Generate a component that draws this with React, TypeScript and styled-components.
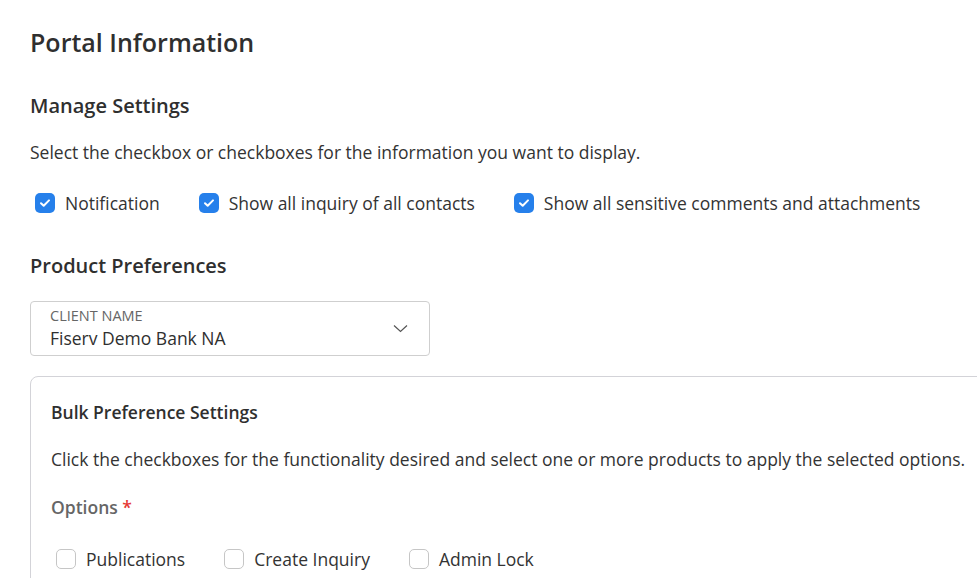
import React, { useState } from 'react'
import styled, { createGlobalStyle } from 'styled-components'

const Global = createGlobalStyle`
  html, body { margin: 0; padding: 0; background: #fff; overflow: hidden; }
  body { font-family: 'Open Sans', 'Noto Sans', sans-serif; color: #333; }
`

const Page = styled.main`
  padding: 23px 0 0 30px;
  width: 1000px;
`

const Title = styled.h1`
  margin: 0;
  font-size: 25px;
  font-weight: 600;
  line-height: 38px;
  color: #2f2f2f;
`

const SectionTitle = styled.h2`
  margin: 0;
  font-size: 20px;
  font-weight: 600;
  line-height: 28px;
  color: #2f2f2f;
`

const Text = styled.p`
  margin: 0;
  font-size: 17.5px;
  line-height: 24px;
  color: #333;
`

const Block = styled.section<{ $top: number }>`
  margin-top: ${({ $top }) => $top}px;
`

const CheckRow = styled.div<{ $gap: number }>`
  display: flex;
  align-items: center;
  gap: ${({ $gap }) => $gap}px;
`

const CheckItem = styled.label`
  display: flex;
  align-items: center;
  gap: 10px;
  font-size: 17.5px;
  line-height: 24px;
  color: #333;
  cursor: pointer;
`

const Box = styled.span<{ $on: boolean }>`
  width: 20px;
  height: 20px;
  margin-left: 5px;
  box-sizing: border-box;
  border-radius: 5px;
  display: flex;
  align-items: center;
  justify-content: center;
  background: ${({ $on }) => ($on ? '#2680eb' : '#fff')};
  border: ${({ $on }) => ($on ? 'none' : '1px solid #c6c6c6')};
`

const Select = styled.div`
  width: 400px;
  height: 55px;
  box-sizing: border-box;
  border: 1px solid #cfcfcf;
  border-radius: 4px;
  padding: 0 21px 0 19px;
  display: flex;
  align-items: center;
  justify-content: space-between;
`

const SelectText = styled.div`
  display: flex;
  flex-direction: column;
  gap: 1px;
`

const SelectLabel = styled.span`
  font-size: 14.5px;
  line-height: 18px;
  color: #666;
  text-transform: uppercase;
`

const SelectValue = styled.span`
  font-size: 17.5px;
  line-height: 24px;
  color: #2f2f2f;
`

const Card = styled.div`
  margin-top: 20px;
  width: 1000px;
  border: 1px solid #d3d3d8;
  border-radius: 8px;
  padding: 23px 20px 40px;
`

const CardTitle = styled.h3`
  margin: 0;
  font-size: 17.5px;
  font-weight: 600;
  line-height: 24px;
  color: #2f2f2f;
`

const OptionsLabel = styled.div`
  font-size: 17.5px;
  font-weight: 600;
  line-height: 24px;
  color: #666;
  span { color: #e53935; }
`

function Check({ on, label }: { on: boolean; label: string }) {
  const [checked, setChecked] = useState(on)
  return (
    <CheckItem onClick={() => setChecked(v => !v)}>
      <Box $on={checked}>
        {checked && (
          <svg width="12" height="10" viewBox="0 0 12 10">
            <path d="M2 5.2 L4.7 7.8 L10 2.4" fill="none" stroke="#fff" strokeWidth="2" strokeLinecap="round" strokeLinejoin="round" />
          </svg>
        )}
      </Box>
      {label}
    </CheckItem>
  )
}

export default function App() {
  return (
    <>
      <Global />
      <Page>
        <Title>Portal Information</Title>

        <Block $top={31}>
          <SectionTitle>Manage Settings</SectionTitle>
        </Block>
        <Block $top={20}>
          <Text>Select the checkbox or checkboxes for the information you want to display.</Text>
        </Block>
        <Block $top={27}>
          <CheckRow $gap={34}>
            <Check on label="Notification" />
            <Check on label="Show all inquiry of all contacts" />
            <Check on label="Show all sensitive comments and attachments" />
          </CheckRow>
        </Block>

        <Block $top={37}>
          <SectionTitle>Product Preferences</SectionTitle>
        </Block>
        <Block $top={21}>
          <Select>
            <SelectText>
              <SelectLabel>Client Name</SelectLabel>
              <SelectValue>Fiserv Demo Bank NA</SelectValue>
            </SelectText>
            <svg width="15" height="9" viewBox="0 0 15 9">
              <path d="M1 1.5 L7.5 7.5 L14 1.5" fill="none" stroke="#555" strokeWidth="1.2" />
            </svg>
          </Select>
        </Block>

        <Card>
          <CardTitle>Bulk Preference Settings</CardTitle>
          <Block $top={23}>
            <Text>Click the checkboxes for the functionality desired and select one or more products to apply the selected options.</Text>
          </Block>
          <Block $top={24}>
            <OptionsLabel>Options <span>*</span></OptionsLabel>
          </Block>
          <Block $top={28}>
            <CheckRow $gap={34}>
              <Check on={false} label="Publications" />
              <Check on={false} label="Create Inquiry" />
              <Check on={false} label="Admin Lock" />
            </CheckRow>
          </Block>
        </Card>
      </Page>
    </>
  )
}
